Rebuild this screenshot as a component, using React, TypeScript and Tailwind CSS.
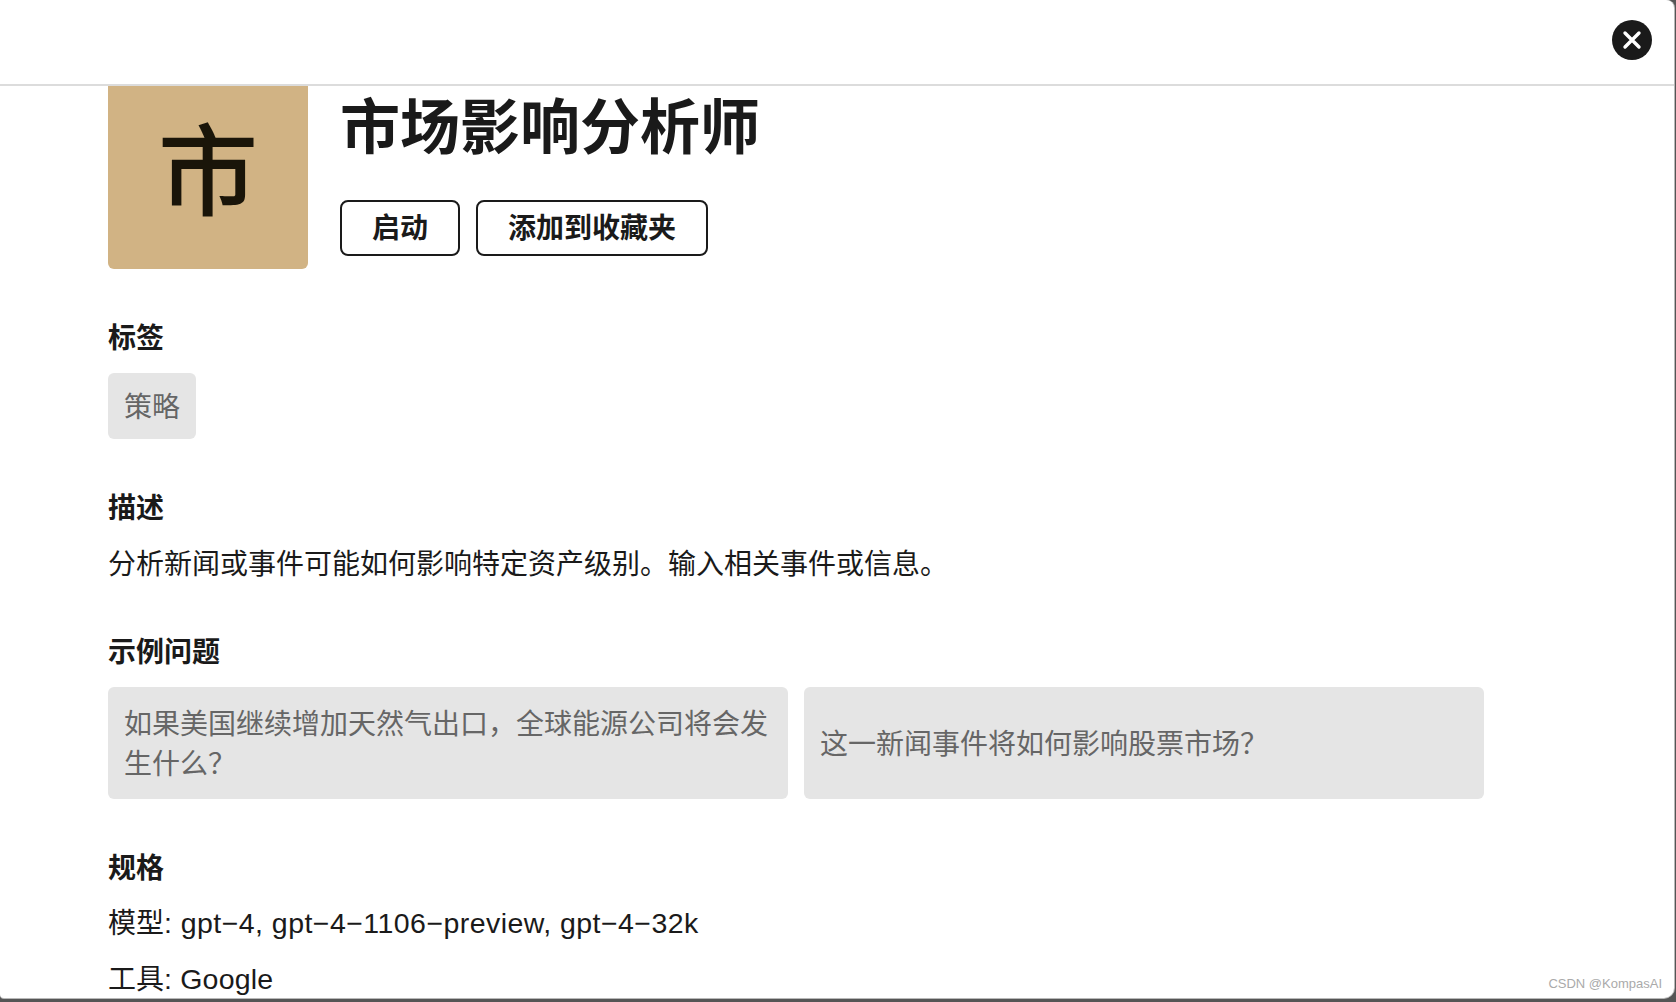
export default function App() {
  const font = "font-['Liberation_Sans','Noto_Sans_CJK_SC',sans-serif]";
  return (
    <div className={`${font} relative h-[1002px] w-[1676px] overflow-hidden bg-[#555555] text-[#1a1a1a]`}>
      {/* Modal */}
      <div className="flex h-[998px] w-[1674px] flex-col overflow-hidden rounded-tr-[8px] rounded-br-[10px] rounded-bl-[4px] bg-white shadow-[0_1px_0_#b8b8b8,1px_0_0_#b8b8b8]">
        <div className="flex h-[86px] shrink-0 items-start justify-end border-b-2 border-[#dcdcdc] pt-[20px] pr-[22px]">
          <button className="flex h-10 w-10 items-center justify-center rounded-full bg-[#1a1a1a]">
            <svg width="22" height="22" viewBox="0 0 22 22" fill="none" stroke="white" strokeWidth="3.4" strokeLinecap="round">
              <path d="M4 4L18 18M18 4L4 18" />
            </svg>
          </button>
        </div>
        <div className="min-h-0 flex-1 overflow-hidden">
          <div className="-mt-[17px] ml-[108px] w-[1376px]">
            <div className="flex gap-8">
              <div className="flex h-[200px] w-[200px] shrink-0 items-center justify-center rounded-[6px] bg-[#d1b384] pt-[7px] text-[100px] leading-none font-medium text-[#1a1509]">
                市
              </div>
              <div className="pt-[24px]">
                <h1 className="text-[60px] leading-[72px] font-bold">市场影响分析师</h1>
                <div className="mt-[35px] flex gap-4">
                  <button className="h-[56px] w-[120px] rounded-[8px] border-2 border-[#1a1a1a] pt-[2px] text-[28px] font-bold">启动</button>
                  <button className="h-[56px] w-[232px] rounded-[8px] border-2 border-[#1a1a1a] pt-[2px] text-[28px] font-bold">添加到收藏夹</button>
                </div>
              </div>
            </div>

            <h2 className="mt-[50px] text-[28px] leading-[40px] font-bold">标签</h2>
            <div className="mt-[14px] flex">
              <span className="rounded-[6px] bg-[#e5e5e5] px-4 pt-[15px] pb-[11px] text-[28px] leading-[40px] text-[#666666]">策略</span>
            </div>

            <h2 className="mt-[50px] text-[28px] leading-[40px] font-bold">描述</h2>
            <p className="mt-4 text-[28px] leading-[40px]">分析新闻或事件可能如何影响特定资产级别。输入相关事件或信息。</p>

            <h2 className="mt-[48px] text-[28px] leading-[40px] font-bold">示例问题</h2>
            <div className="mt-[14px] grid grid-cols-2 gap-4">
              <div className="flex h-[112px] items-center rounded-[6px] bg-[#e5e5e5] px-4 pt-1 text-[28px] leading-[40px] text-[#666666]">
                如果美国继续增加天然气出口，全球能源公司将会发生什么？
              </div>
              <div className="flex h-[112px] items-center rounded-[6px] bg-[#e5e5e5] px-4 pt-1 text-[28px] leading-[40px] text-[#666666]">
                这一新闻事件将如何影响股票市场？
              </div>
            </div>

            <h2 className="mt-[50px] text-[28px] leading-[40px] font-bold">规格</h2>
            <p className="mt-[14px] text-[28px] leading-[40px]">模型<span className="text-[28.5px] tracking-[0.45px]">: gpt−4, gpt−4−1106−preview, gpt−4−32k</span></p>
            <p className="mt-[15px] text-[28px] leading-[40px]">工具<span className="text-[28.5px] tracking-[0.2px]">: Google</span></p>
          </div>
        </div>
      </div>
      <span className="absolute right-[14px] bottom-[9px] text-[13px] leading-[18px] text-[#aaaaaa]">CSDN @KompasAI</span>
    </div>
  );
}
